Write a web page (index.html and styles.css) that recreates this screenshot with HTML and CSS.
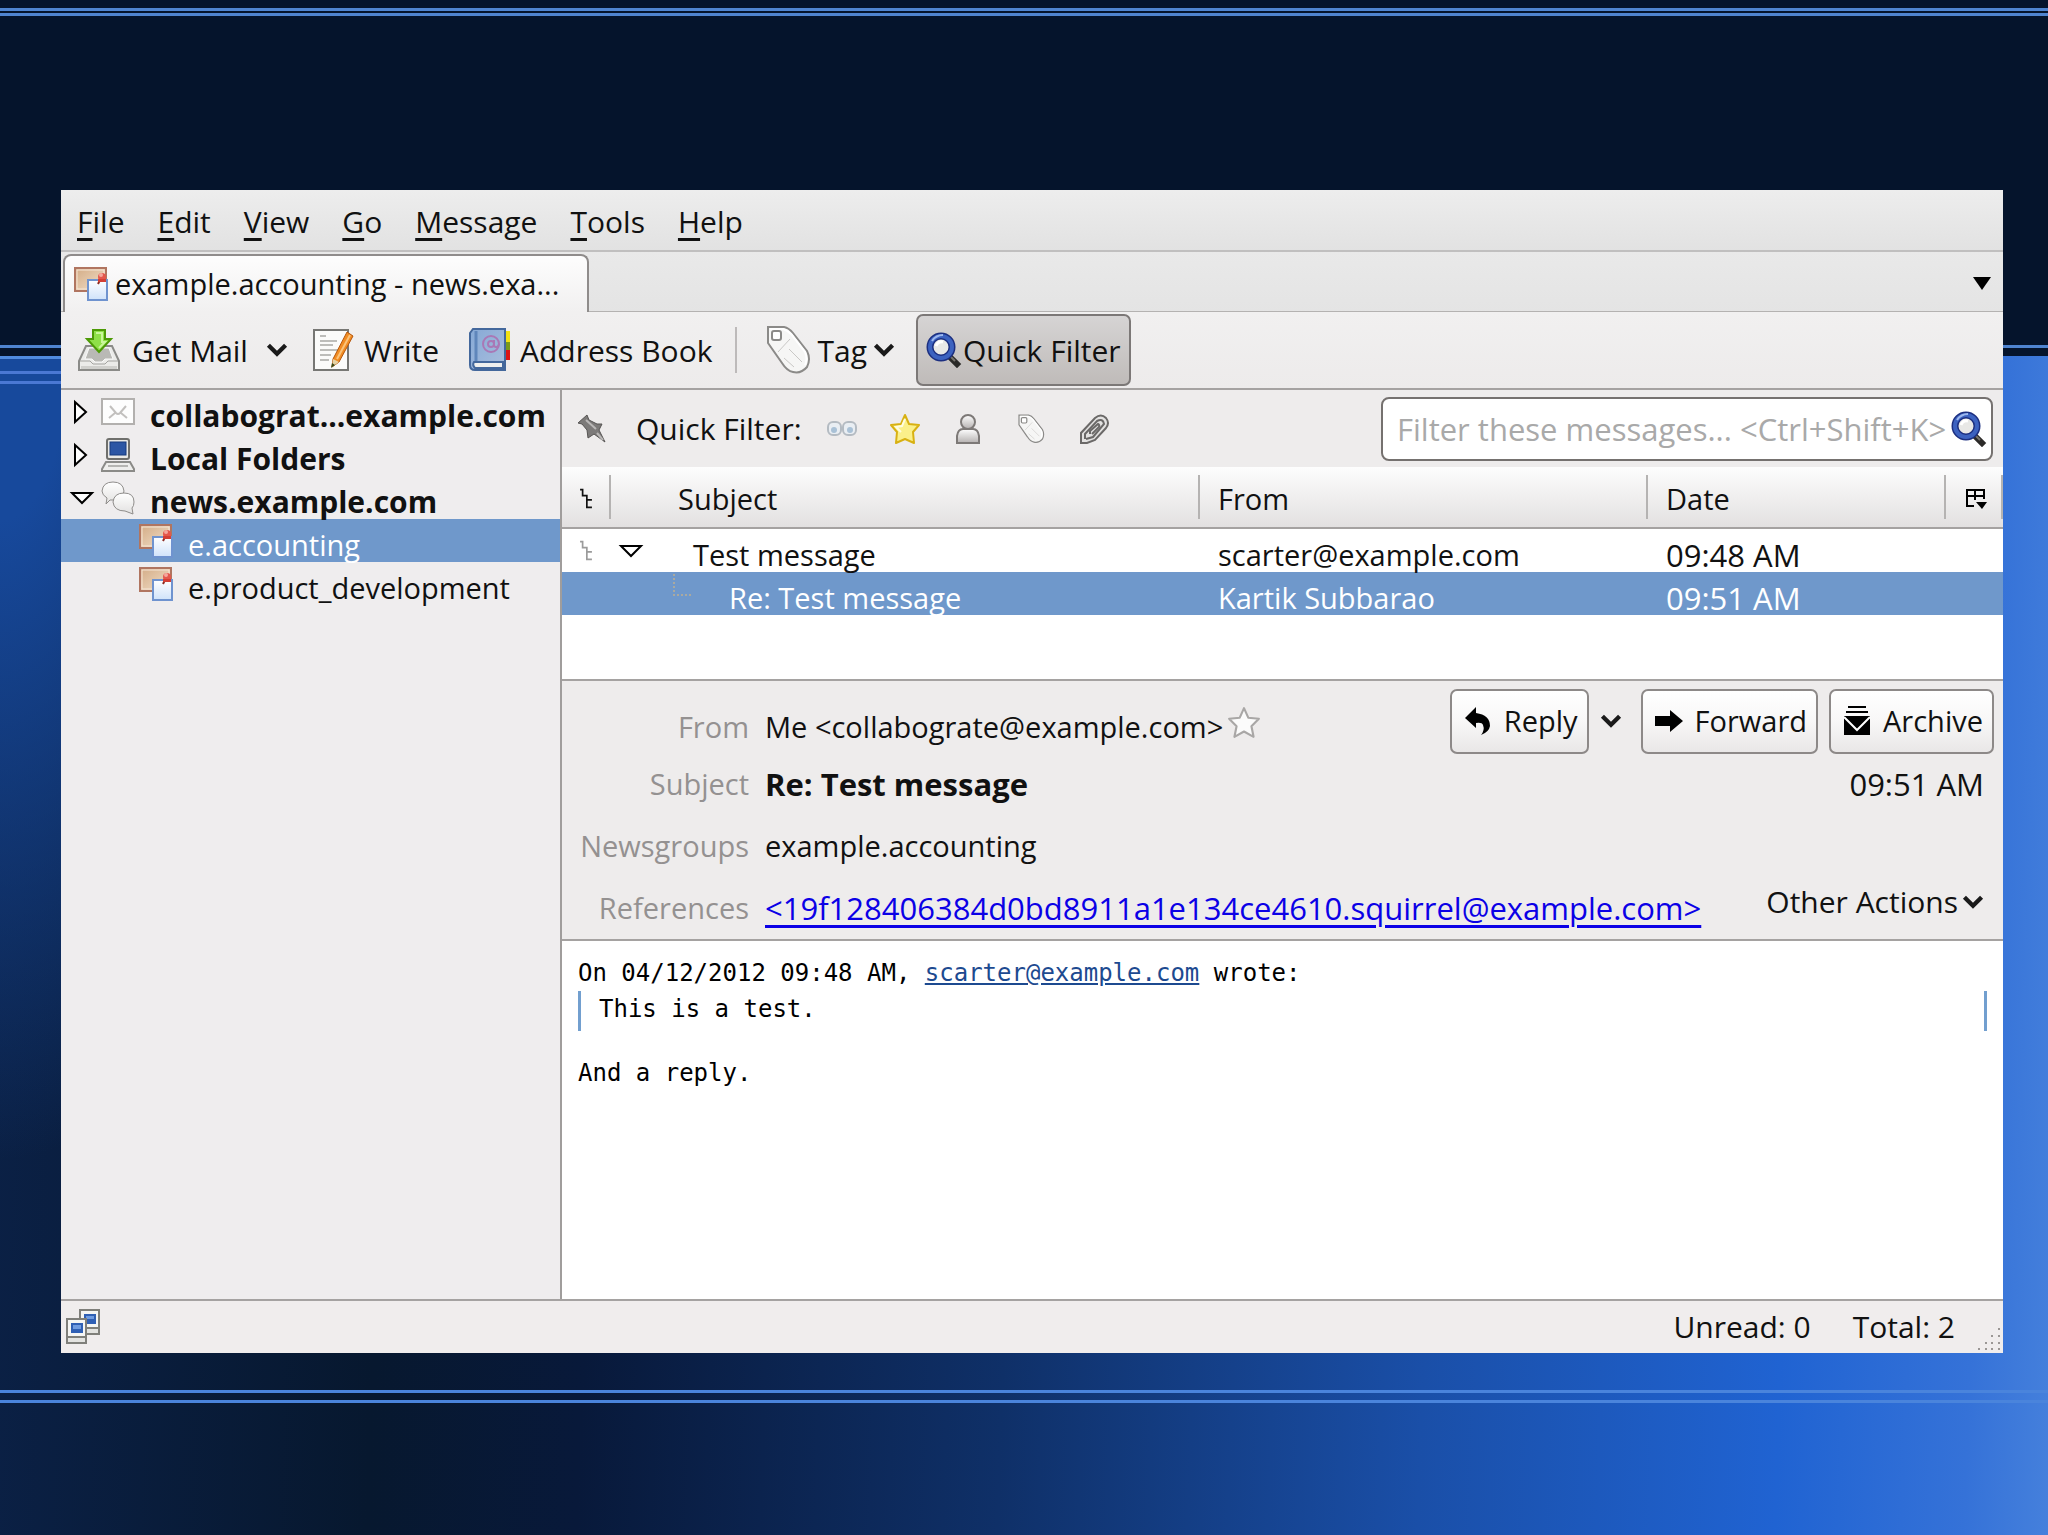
FILE: index.html
```html
<!DOCTYPE html>
<html lang="en">
  <head>
    <title>example.accounting - news.example.com</title>
    <meta charset="UTF-8">
    <link rel="stylesheet" href="styles.css">
  </head>
  <body>
    <!-- shared icons -->
    <svg class="defs" width="0" height="0">
      <defs>
        <linearGradient id="gBoard" x1="0" y1="0" x2="1" y2="1">
          <stop offset="0" stop-color="#d3ab85"/><stop offset="1" stop-color="#f3e2cc"/>
        </linearGradient>
        <linearGradient id="gNote" x1="0" y1="0" x2="0" y2="1">
          <stop offset="0" stop-color="#ffffff"/><stop offset="1" stop-color="#cfe2fa"/>
        </linearGradient>
        <linearGradient id="gGrey" x1="0" y1="0" x2="0" y2="1">
          <stop offset="0" stop-color="#ffffff"/><stop offset="1" stop-color="#b5b1b0"/>
        </linearGradient>
        <linearGradient id="gBubble" x1="0" y1="0" x2="0" y2="1">
          <stop offset="0" stop-color="#ffffff"/><stop offset="1" stop-color="#e2e1e0"/>
        </linearGradient>
        <linearGradient id="gBook" x1="0" y1="0" x2="1" y2="1">
          <stop offset="0" stop-color="#86a9d6"/><stop offset="1" stop-color="#a9bedd"/>
        </linearGradient>
      </defs>
      <symbol id="board" viewBox="0 0 34 34">
        <rect x="1" y="1" width="31" height="23" fill="url(#gBoard)" stroke="#b07560" stroke-width="2"/>
        <rect x="3" y="3" width="27" height="19" fill="none" stroke="#f6e6d6" stroke-width="1"/>
        <rect x="14" y="13" width="19" height="20" fill="url(#gNote)" stroke="#6f93cf" stroke-width="2"/>
        <path d="M24 17l2-4" stroke="#8a2a22" stroke-width="2"/>
        <circle cx="28" cy="10" r="4" fill="#e4574c"/>
        <circle cx="27" cy="8" r="2" fill="#f5a79c"/>
        <rect x="24" y="12" width="8" height="3" fill="#d33f35"/>
      </symbol>
      <symbol id="tag" viewBox="0 0 46 50">
        <path d="M3 2L19 2Q24 3 28 8L42 26Q46 34 42 42Q36 49 28 47Q22 46 17 38L3 18Z" fill="#f6f6f5" stroke="#8b8a88" stroke-width="2"/>
        <path d="M5 4L18 4Q22 5 26 9L40 27Q43 34 40 40" fill="none" stroke="#fff" stroke-width="2"/>
        <rect x="7" y="6" width="9" height="9" rx="2" fill="#fff" stroke="#8b8a88" stroke-width="2"/>
        <path d="M13 27L25 14M19 33l10 9M24 24l13 13" stroke="#c9c8c6" stroke-width="1" fill="none"/>
      </symbol>
      <symbol id="glass" viewBox="0 0 36 36">
        <path d="M23 24L31 32" stroke="#2b2a28" stroke-width="6" stroke-linecap="square"/>
        <path d="M24 24L29 29" stroke="#77736c" stroke-width="2"/>
        <circle cx="15" cy="15" r="11" fill="#e8e8e6" stroke="#1c2f80" stroke-width="7"/>
        <circle cx="15" cy="15" r="11" fill="none" stroke="#3c62c0" stroke-width="4"/>
        <path d="M6 9Q10 3 17 3" stroke="#9db8ee" stroke-width="2" fill="none"/>
        <path d="M10 14Q12 9 17 10" stroke="#fff" stroke-width="3" fill="none"/>
      </symbol>
      <symbol id="chevron" viewBox="0 0 20 14">
        <path d="M2 2L10 10L18 2" fill="none" stroke="#1a1a1a" stroke-width="4"/>
      </symbol>
      <symbol id="twisty" viewBox="0 0 16 26">
        <path d="M2 3L13 13L2 23Z" fill="#fff" stroke="#000" stroke-width="2"/>
      </symbol>
      <symbol id="twisty-open" viewBox="0 0 26 16">
        <path d="M3 3L23 3L13 13Z" fill="#fff" stroke="#000" stroke-width="2"/>
      </symbol>
      <symbol id="thread" viewBox="0 0 16 26">
        <path d="M1 2H4V9H9V23H15M9 14H15" fill="none" stroke="currentColor" stroke-width="2"/>
      </symbol>
    </svg>

    <div class="window">
      <nav class="menubar">
        <button><u>F</u>ile</button>
        <button><u>E</u>dit</button>
        <button><u>V</u>iew</button>
        <button><u>G</u>o</button>
        <button><u>M</u>essage</button>
        <button><u>T</u>ools</button>
        <button><u>H</u>elp</button>
      </nav>

      <div class="tabbar">
        <button class="tab">
          <svg class="icon-board"><use href="#board"/></svg>
          <span>example.accounting - news.exa...</span>
        </button>
        <button class="all-tabs" aria-label="List all tabs">
          <svg width="18" height="14" viewBox="0 0 18 14"><path d="M0 1H18L9 14Z" fill="#000"/></svg>
        </button>
      </div>

      <div class="toolbar">
        <button class="tool get-mail">
          <svg width="42" height="44" viewBox="0 0 42 44">
            <path d="M8 18L34 18L41 33V42H1V33Z" fill="#ebebe9" stroke="#8b8b88" stroke-width="2"/>
            <path d="M11 20H31L35 31H27L24 34H17L14 31H7Z" fill="#b9b9b5" stroke="#f9f9f9" stroke-width="1"/>
            <path d="M2 33H12L15 36H27L30 33H40" fill="none" stroke="#a3a3a0" stroke-width="1"/>
            <rect x="3" y="38" width="36" height="3" fill="#d0d0cd"/>
            <path d="M15 2H27V11H33L21 24L9 11H15Z" fill="#8fe048" stroke="#4d9a06" stroke-width="2"/>
            <path d="M18 5H24V14H27L21 20" fill="none" stroke="#c9f79a" stroke-width="2"/>
          </svg>
          <span>Get Mail</span>
        </button>
        <button class="drop" aria-label="Get mail options"><svg class="chev"><use href="#chevron"/></svg></button>
        <button class="tool write">
          <svg width="42" height="44" viewBox="0 0 42 44">
            <rect x="1" y="2" width="34" height="40" fill="#fbfbfa" stroke="#777774" stroke-width="2"/>
            <path d="M7 8H13M7 13H24M7 17H20M7 22H26M7 27H18M7 32H16" stroke="#bdbdba" stroke-width="2"/>
            <path d="M20 31L34 4L40 8L26 34L19 39Z" fill="#f28c22" stroke="#b5560b" stroke-width="1"/>
            <path d="M24 31L37 7" stroke="#fbc37a" stroke-width="2"/>
            <path d="M20 31L26 34L19 39Z" fill="#e6d3a6"/>
            <path d="M19 35L22 37L18 40Z" fill="#3d4a18"/>
          </svg>
          <span>Write</span>
        </button>
        <button class="tool address">
          <svg width="42" height="44" viewBox="0 0 42 44">
            <rect x="34" y="3" width="7" height="13" fill="#f2e113"/>
            <rect x="34" y="14" width="7" height="9" fill="#7a9a1c"/>
            <rect x="34" y="22" width="7" height="10" fill="#dc1414"/>
            <path d="M4 1H36V42H6Q1 42 1 37V5Z" fill="url(#gBook)" stroke="#44689c" stroke-width="2"/>
            <path d="M7 3V33" stroke="#5f86bb" stroke-width="3"/>
            <path d="M5 34H34V40H6Q3 37 5 34Z" fill="#f0f0ee" stroke="#44689c" stroke-width="2"/>
            <circle cx="22" cy="16" r="8" fill="none" stroke="#a978b6" stroke-width="2"/>
            <circle cx="22" cy="16" r="3" fill="none" stroke="#a978b6" stroke-width="2"/>
            <path d="M25 12V18Q28 21 30 16" fill="none" stroke="#a978b6" stroke-width="2"/>
          </svg>
          <span>Address Book</span>
        </button>
        <div class="separator"></div>
        <button class="tool tag">
          <svg width="46" height="50"><use href="#tag"/></svg>
          <span>Tag</span>
          <svg class="chev"><use href="#chevron"/></svg>
        </button>
        <button class="tool quick-filter-btn">
          <svg width="36" height="36"><use href="#glass"/></svg>
          <span>Quick Filter</span>
        </button>
      </div>

      <div class="content">
        <ul class="folders">
          <li>
            <svg class="twisty"><use href="#twisty"/></svg>
            <svg class="folder-icon" viewBox="0 0 34 34">
              <rect x="1" y="4" width="32" height="25" fill="#fdfdfd" stroke="#b2b0ae" stroke-width="2"/>
              <path d="M9 11L15 18Q17 20 19 18L25 11M8 23L14 18M26 23L20 18" fill="none" stroke="#c2c0be" stroke-width="2"/>
            </svg>
            <b>collabograt...example.com</b>
          </li>
          <li>
            <svg class="twisty"><use href="#twisty"/></svg>
            <svg class="folder-icon" viewBox="0 0 34 34">
              <rect x="6" y="1" width="22" height="20" rx="2" fill="#e9e9e6" stroke="#6f6f6c" stroke-width="2"/>
              <rect x="9" y="4" width="16" height="13" fill="#2c56a4" stroke="#173a7c" stroke-width="1"/>
              <path d="M5 24H29L33 31V33H1V31Z" fill="#eeeeec" stroke="#8b8b88" stroke-width="2"/>
              <path d="M7 28H27" stroke="#b5b5b2" stroke-width="2"/>
            </svg>
            <b>Local Folders</b>
          </li>
          <li>
            <svg class="twisty-open"><use href="#twisty-open"/></svg>
            <svg class="folder-icon" viewBox="0 0 34 34">
              <path d="M5 23L6 17Q1 14 1 10Q2 1 12 1Q22 1 23 10Q22 19 12 19L9 19Z" fill="url(#gBubble)" stroke="#8f8d8b" stroke-width="1"/>
              <path d="M32 33L24 30Q13 30 12 21Q13 12 23 12Q33 12 33 21Q33 25 31 27Z" fill="url(#gBubble)" stroke="#8f8d8b" stroke-width="1"/>
            </svg>
            <b>news.example.com</b>
          </li>
          <li class="child selected">
            <svg class="folder-icon"><use href="#board"/></svg>
            <span>e.accounting</span>
          </li>
          <li class="child">
            <svg class="folder-icon"><use href="#board"/></svg>
            <span>e.product_development</span>
          </li>
        </ul>

        <main class="mail">
          <div class="filterbar">
            <button aria-label="Keep filters applied">
              <svg width="30" height="30" viewBox="0 0 30 30">
                <path d="M1 9L10 1L12 6L20 10L25 10L22 16L28 28L17 20L11 24L10 16L5 10Z" fill="#7c7a79" stroke="#565453" stroke-width="1"/>
                <path d="M9 6L19 15M20 19L26 26" stroke="#b9b7b6" stroke-width="2"/>
              </svg>
            </button>
            <label for="filter">Quick Filter:</label>
            <div class="filter-icons">
              <button aria-label="Unread">
                <svg width="32" height="32" viewBox="0 0 32 32">
                  <rect x="2" y="9" width="13" height="13" rx="5" fill="#e9eef3" stroke="#b4bbc2" stroke-width="2"/>
                  <rect x="17" y="9" width="13" height="13" rx="5" fill="#e9eef3" stroke="#b4bbc2" stroke-width="2"/>
                  <circle cx="8" cy="17" r="3" fill="#a9c1d6"/><circle cx="24" cy="17" r="3" fill="#a9c1d6"/>
                </svg>
              </button>
              <button aria-label="Starred">
                <svg width="32" height="32" viewBox="0 0 32 32">
                  <path d="M16 2L20 11L30 12L24 19L25 30L16 26L7 30L8 19L2 12L12 11Z" fill="#fbf08a" stroke="#d8b113" stroke-width="2" stroke-linejoin="round"/>
                  <path d="M16 6L13 13L7 14L12 19" fill="none" stroke="#fffde0" stroke-width="2"/>
                </svg>
              </button>
              <button aria-label="Contact">
                <svg width="32" height="32" viewBox="0 0 32 32">
                  <path d="M5 30V23Q6 16 11 16H21Q26 16 27 23V30Z" fill="url(#gGrey)" stroke="#7d7977" stroke-width="2"/>
                  <circle cx="16" cy="9" r="7" fill="url(#gGrey)" stroke="#7d7977" stroke-width="2"/>
                </svg>
              </button>
              <button aria-label="Tags"><svg width="32" height="30"><use href="#tag"/></svg></button>
              <button aria-label="Attachment">
                <svg width="32" height="32" viewBox="0 0 32 32" fill="none">
                  <path d="M3 30V20L17 5Q23 0 28 5Q32 10 28 15L17 27L9 30Z" stroke="#6b6968" stroke-width="2" fill="#e3e2e1"/>
                  <path d="M7 26V21L19 8Q25 5 26 11L15 24L8 26" stroke="#6b6968" stroke-width="2"/>
                  <path d="M12 21V18L20 11Q22 12 21 14L14 21" stroke="#6b6968" stroke-width="2"/>
                </svg>
              </button>
            </div>
            <div class="search">
              <input id="filter" type="text" placeholder="Filter these messages... &lt;Ctrl+Shift+K&gt;">
              <svg width="36" height="36"><use href="#glass"/></svg>
            </div>
          </div>

          <div class="threads">
            <table>
              <colgroup>
                <col class="c-thread"><col><col class="c-from"><col class="c-date"><col class="c-pick">
              </colgroup>
              <thead>
                <tr>
                  <th><svg class="thread-head"><use href="#thread"/></svg></th>
                  <th class="h-subject">Subject</th>
                  <th>From</th>
                  <th>Date</th>
                  <th>
                    <svg width="24" height="22" viewBox="0 0 24 22"><path d="M10 18H3V2H20V11M3 8H20M11 2V12" fill="none" stroke="#000" stroke-width="2"/><path d="M12 14H23L18 21Z"/></svg>
                  </th>
                </tr>
              </thead>
              <tbody>
                <tr>
                  <td class="t-icon"><svg class="thread-icon"><use href="#thread"/></svg></td>
                  <td class="t-subject"><div><svg class="twisty-open"><use href="#twisty-open"/></svg><span>Test message</span></div></td>
                  <td>scarter@example.com</td>
                  <td class="t-date" colspan="2">09:48 AM</td>
                </tr>
                <tr class="selected">
                  <td></td>
                  <td class="t-subject reply"><div><i></i><span>Re: Test message</span></div></td>
                  <td>Kartik Subbarao</td>
                  <td class="t-date" colspan="2">09:51 AM</td>
                </tr>
              </tbody>
            </table>
          </div>

          <header class="msg-header">
            <div class="row from-row">
              <span class="name">From</span>
              <span class="value">Me &lt;collabograte@example.com&gt;</span>
              <svg class="star" viewBox="0 0 32 32"><path d="M16 2L20 11L30 12L23 19L25 29L16 24L7 29L9 19L2 12L12 11Z" fill="#fbfbfb" stroke="#a9a7a6" stroke-width="2" stroke-linejoin="round"/></svg>
              <div class="actions">
                <button class="action">
                  <svg width="28" height="30" viewBox="0 0 28 30"><path d="M1 12L12 1V7Q26 9 26 20Q25 26 17 29Q21 24 19 19Q18 16 12 17V22Z"/></svg>
                  Reply
                </button>
                <button class="drop" aria-label="More reply options"><svg class="chev"><use href="#chevron"/></svg></button>
                <button class="action">
                  <svg width="28" height="30" viewBox="0 0 28 30"><path d="M0 10H15V4L28 15L15 26V20H0Z"/></svg>
                  Forward
                </button>
                <button class="action">
                  <svg width="28" height="30" viewBox="0 0 28 30"><path d="M5 1H23M3 6H25" stroke="#000" stroke-width="2"/><path d="M1 10H27V29H1Z"/><path d="M1 11L14 24L27 11" fill="none" stroke="#fff" stroke-width="2"/></svg>
                  Archive
                </button>
              </div>
            </div>
            <div class="row subject-row">
              <span class="name">Subject</span>
              <b class="value">Re: Test message</b>
              <span class="time">09:51 AM</span>
            </div>
            <div class="row">
              <span class="name">Newsgroups</span>
              <span class="value">example.accounting</span>
            </div>
            <div class="row">
              <span class="name">References</span>
              <a class="value" href="#ref">&lt;19f128406384d0bd8911a1e134ce4610.squirrel@example.com&gt;</a>
              <button class="other">Other Actions<svg class="chev"><use href="#chevron"/></svg></button>
            </div>
          </header>

          <article class="msg-body">
            <p>On 04/12/2012 09:48 AM, <a href="mailto:scarter@example.com">scarter@example.com</a> wrote:</p>
            <blockquote>This is a test.</blockquote>
            <p>And a reply.</p>
          </article>
        </main>
      </div>

      <footer class="statusbar">
        <svg width="36" height="36" viewBox="0 0 36 36">
          <g stroke="#7f7f7a" stroke-width="2">
            <rect x="15" y="1" width="19" height="18" fill="#f5f5f3"/>
            <rect x="15" y="19" width="19" height="6" fill="#e3e3e0"/>
          </g>
          <rect x="19" y="5" width="12" height="10" fill="#2f5fb4"/>
          <rect x="21" y="7" width="8" height="3" fill="#6f9be0"/>
          <g stroke="#7f7f7a" stroke-width="2">
            <rect x="2" y="10" width="19" height="18" fill="#f5f5f3"/>
            <rect x="2" y="28" width="19" height="6" fill="#e3e3e0"/>
          </g>
          <rect x="6" y="14" width="12" height="10" fill="#2f5fb4"/>
          <rect x="8" y="16" width="8" height="4" fill="#6f9be0"/>
        </svg>
        <span class="count">Unread: 0</span>
        <span>Total: 2</span>
        <svg class="grip" width="26" height="26" viewBox="0 0 26 26" fill="#9b9795">
          <path d="M21 1h2v2h-2zM14 8h2v2h-2zM21 8h2v2h-2zM8 15h2v2h-2zM14 15h2v2h-2zM21 15h2v2h-2zM1 21h2v2h-2zM8 21h2v2h-2zM14 21h2v2h-2zM21 21h2v2h-2z"/>
        </svg>
      </footer>
    </div>
  </body>
</html>
```
FILE: styles.css
```css
* {
  box-sizing: border-box;
}
body {
  margin: 0;
  min-height: 100vh;
  display: flex;
  padding: 190px 45px 182px 61px;
  font-family: "Open Sans", "Noto Sans", sans-serif;
  font-size: 29px;
  line-height: 40px;
  color: #111;
  background-color: #05142c;
  background-image:
    /* horizontal light lines */
    linear-gradient(#4f84d0, #4f84d0),
    linear-gradient(#4f84d0, #4f84d0),
    linear-gradient(#4f84d0, #4f84d0),
    linear-gradient(#4f8be0, #4f8be0),
    linear-gradient(#4a78d4, #4a78d4),
    linear-gradient(#4a78d4, #4a78d4),
    linear-gradient(#4a84dc, #4a84dc),
    linear-gradient(#4a84dc, #4a84dc),
    /* dark top part */
    linear-gradient(#05142c, #05142c),
    /* blue glow on the left edge, then the wide one */
    radial-gradient(ellipse 340px 800px at 0 360px, #17499c 0, #17499c 20%, rgba(8, 25, 58, 0) 100%),
    linear-gradient(92deg, #0b2147 0, #07182f 20%, #08193a 30%, #0f3068 50%, #1a4fa8 70%, #2063d2 87%, #3572d8 96%, #4580dc 100%);
  background-repeat: no-repeat;
  background-size:
    100% 3px, 100% 3px, 100% 3px, 50% 3px, 50% 3px, 50% 3px, 100% 3px, 100% 3px,
    100% 356px, 100% 100%, 100% 100%;
  background-position:
    0 8px, 0 13px, 0 345px, 0 356px, 0 371px, 0 381px,
    0 calc(100% - 142px), 0 calc(100% - 132px),
    0 0, 0 0, 0 0;
}
button {
  padding: 0;
  border: 0;
  background: none;
  font: inherit;
  color: inherit;
  display: flex;
  align-items: center;
}
svg {
  display: block;
  flex: none;
}
.defs {
  position: absolute;
}
.window {
  flex: 1;
  min-width: 0;
  display: flex;
  flex-direction: column;
  background-color: #eeecec;
}
.chev {
  width: 22px;
  height: 15px;
}
.menubar, .toolbar, .filterbar label, .folders b, .other, .statusbar {
  font-size: 30px;
}
.search input, .row b, .row a, .time, .t-date {
  font-size: 31px;
}

/* menu bar and tabs */
.menubar {
  display: flex;
  gap: 33px;
  height: 62px;
  padding: 3px 16px 0;
  border-bottom: 2px solid #c0bfbf;
  background: linear-gradient(#ededed, #e2e2e2);
}
.menubar button {
  display: block;
}
.menubar u {
  text-underline-offset: 5px;
}
.tabbar {
  display: flex;
  justify-content: space-between;
  height: 60px;
  padding: 2px 12px 0 2px;
  background: linear-gradient(#b4b2b1, #b4b2b1) no-repeat 0 100% / 100% 1px, linear-gradient(#e9e9e9, #e4e4e4);
}
.tab {
  gap: 7px;
  width: 526px;
  padding: 0 9px;
  border: 2px solid #8f8c8b;
  border-bottom: 0;
  border-radius: 8px 8px 0 0;
  background: linear-gradient(#fdfdfd, #f1f0f0);
  white-space: nowrap;
}
.icon-board {
  width: 34px;
  height: 34px;
}

/* main toolbar */
.toolbar {
  display: flex;
  align-items: center;
  height: 78px;
  padding: 0 17px;
  border-bottom: 2px solid #a5a2a1;
  background: linear-gradient(#f1f0f0, #edebeb);
}
.tool {
  gap: 9px;
  white-space: nowrap;
}
.tool span {
  padding-top: 2px;
}
.get-mail {
  gap: 12px;
}
.toolbar .drop {
  margin: 0 25px 0 18px;
}
.address {
  margin-left: 30px;
}
.separator {
  width: 2px;
  height: 46px;
  margin: 0 28px 0 23px;
  background-color: #bdbaba;
}
.tag {
  gap: 6px;
}
.quick-filter-btn {
  gap: 1px;
  height: 72px;
  margin-left: 21px;
  padding: 0 8px;
  border: 2px solid #7c7877;
  border-radius: 7px;
  background: linear-gradient(#d6d4d4, #bfbbb9);
}

/* folder pane */
.content {
  flex: 1;
  display: flex;
}
.folders {
  width: 501px;
  margin: 0;
  padding: 0;
  list-style: none;
  border-right: 2px solid #a09d9c;
  background-color: #efedee;
}
.folders li {
  display: flex;
  align-items: center;
  height: 43px;
  padding-left: 8px;
  white-space: nowrap;
}
.folders b, .folders span {
  padding-top: 8px;
}
.twisty {
  width: 16px;
  height: 26px;
  margin: 0 12px 0 4px;
}
.twisty-open {
  width: 26px;
  height: 16px;
  margin-right: 6px;
}
.folder-icon {
  width: 34px;
  height: 34px;
  margin-right: 15px;
}
.folders .child {
  padding-left: 78px;
}
.folders .selected {
  color: #fff;
  background-color: #6f98cb;
}

/* quick filter bar */
.mail {
  flex: 1;
  min-width: 0;
  display: flex;
  flex-direction: column;
}
.filterbar {
  display: flex;
  align-items: center;
  height: 77px;
  padding: 0 10px 0 15px;
}
.filterbar label {
  margin: 0 24px 0 29px;
}
.filter-icons {
  display: flex;
  gap: 31px;
}
.search {
  display: flex;
  align-items: center;
  width: 612px;
  height: 64px;
  margin-left: auto;
  padding: 0 4px 0 14px;
  border: 2px solid #75716f;
  border-radius: 8px;
  background-color: #fff;
}
.search input {
  flex: 1;
  min-width: 0;
  padding: 0;
  border: 0;
  outline: 0;
  background: none;
  font-family: inherit;
}
.search input::placeholder {
  color: #a9a9a9;
}

/* thread list */
.threads {
  height: 214px;
  border-bottom: 2px solid #a5a2a1;
  background-color: #fff;
}
table {
  width: 100%;
  table-layout: fixed;
  border-collapse: collapse;
}
.c-thread {
  width: 49px;
}
.c-from {
  width: 448px;
}
.c-date {
  width: 298px;
}
.c-pick {
  width: 57px;
}
thead {
  background: linear-gradient(#fdfdfd, #e2e0e0);
}
th {
  height: 61px;
  padding: 4px 0 0 18px;
  border-bottom: 2px solid #a5a2a1;
  font-weight: normal;
  text-align: left;
  background: linear-gradient(#b5b3b2, #b5b3b2) no-repeat 100% 50% / 2px 44px;
}
.h-subject {
  padding-left: 67px;
}
th:first-child, .t-icon {
  padding-left: 17px;
}
.thread-head, .thread-icon {
  width: 14px;
  height: 22px;
}
.thread-icon {
  color: #9b9b9b;
}
td {
  height: 43px;
  padding: 3px 0 0 18px;
  line-height: 34px;
  vertical-align: bottom;
  white-space: nowrap;
}
td.t-icon {
  padding-top: 0;
  vertical-align: middle;
}
td.t-subject {
  padding: 0 0 0 7px;
}
.t-subject div {
  display: flex;
  align-items: center;
  height: 43px;
}
.t-subject .twisty-open {
  margin-right: 49px;
}
.t-subject span {
  padding-top: 9px;
}
td.reply {
  padding-left: 62px;
}
.reply i {
  width: 18px;
  height: 22px;
  margin: 0 38px 18px 0;
  border: dotted #a9a9a0;
  border-width: 0 0 2px 2px;
}
tr.selected {
  color: #fff;
  background-color: #6f98cb;
}

/* message header */
.msg-header {
  padding: 4px 9px 0 0;
  border-bottom: 2px solid #a5a2a1;
}
.row {
  display: flex;
  align-items: center;
  height: 62px;
}
.from-row {
  height: 72px;
}
.subject-row {
  height: 58px;
  padding-bottom: 4px;
}
.name {
  width: 187px;
  margin-right: 16px;
  color: #949191;
  text-align: right;
}
.from-row .name, .from-row .value {
  padding-top: 12px;
}
.row a {
  color: #0b00e6;
  text-underline-offset: 5px;
}
.star {
  width: 34px;
  height: 34px;
  margin: 4px 0 0 4px;
}
.actions {
  display: flex;
  align-items: center;
  margin-left: auto;
}
.action {
  gap: 12px;
  height: 65px;
  margin-left: 11px;
  padding: 0 9px 0 12px;
  border: 2px solid #8d8988;
  border-radius: 7px;
  background: linear-gradient(#fff, #f8f7f7 50%, #e9e7e7);
}
.actions .drop {
  margin: 0 8px 0 11px;
}
.time {
  margin: 0 10px 0 auto;
}
.other {
  gap: 4px;
  margin: 0 10px 12px auto;
}

/* message text */
.msg-body {
  flex: 1;
  padding: 14px 16px 0 16px;
  background-color: #fff;
  font-family: "DejaVu Sans Mono", monospace;
  font-size: 24px;
  line-height: 36px;
  color: #000;
}
.msg-body p {
  margin: 0;
}
.msg-body a {
  color: #1d4a90;
}
blockquote {
  margin: 0 0 24px;
  padding: 0 18px 4px;
  border: solid #729fcf;
  border-width: 0 3px;
}

/* status bar */
.statusbar {
  display: flex;
  align-items: center;
  height: 54px;
  padding: 0 0 0 4px;
  border-top: 2px solid #a5a2a1;
  background-color: #f0eded;
}
.count {
  margin: 0 42px 0 auto;
}
.grip {
  align-self: flex-end;
  margin-left: 22px;
}
```
